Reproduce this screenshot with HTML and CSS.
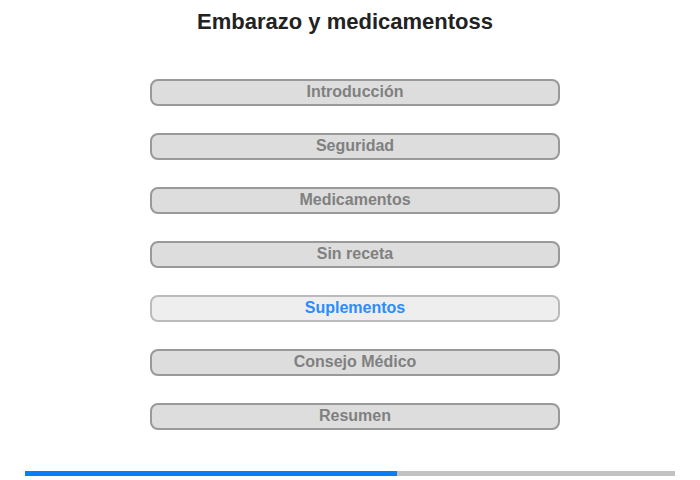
FILE: index.html
```html
<!DOCTYPE html>
<html lang="es">
<head>
<meta charset="utf-8">
<title>Embarazo y medicamentoss</title>
<link rel="stylesheet" href="styles.css">
</head>
<body>
<div class="page">
  <h1 class="title">Embarazo y medicamentoss</h1>
  <nav class="menu">
    <button class="item">Introducción</button>
    <button class="item">Seguridad</button>
    <button class="item">Medicamentos</button>
    <button class="item">Sin receta</button>
    <button class="item active">Suplementos</button>
    <button class="item">Consejo Médico</button>
    <button class="item">Resumen</button>
  </nav>
  <div class="progress"><div class="progress-fill" style="width:57.2%"></div></div>
</div>
</body>
</html>
```
FILE: styles.css
```css
html, body {
  margin: 0;
  padding: 0;
  background: #fff;
}
.page {
  width: 700px;
  height: 480px;
  display: flex;
  flex-direction: column;
  font-family: "Liberation Sans", Arial, sans-serif;
}
.title {
  margin: 0;
  padding: 9px 10px 0 0;
  font-size: 22px;
  line-height: 25px;
  font-weight: bold;
  color: #222;
  text-align: center;
}
.menu {
  display: flex;
  flex-direction: column;
  gap: 27px;
  width: 410px;
  margin: 45px 0 0 150px;
}
.item {
  box-sizing: border-box;
  height: 27px;
  width: 100%;
  margin: 0;
  padding: 0 0 1px;
  border: 2px solid #999;
  border-radius: 8px;
  background: #ddd;
  color: #808080;
  font-family: "Liberation Sans", Arial, sans-serif;
  font-size: 16px;
  font-weight: bold;
  text-align: center;
}
.item.active {
  background: #eee;
  border-color: #bbb;
  color: #2b8cff;
}
.progress {
  margin: auto 25px 4px 25px;
  height: 5px;
  background: #c2c2c2;
}
.progress-fill {
  height: 100%;
  background: #0a7ff5;
}
```
